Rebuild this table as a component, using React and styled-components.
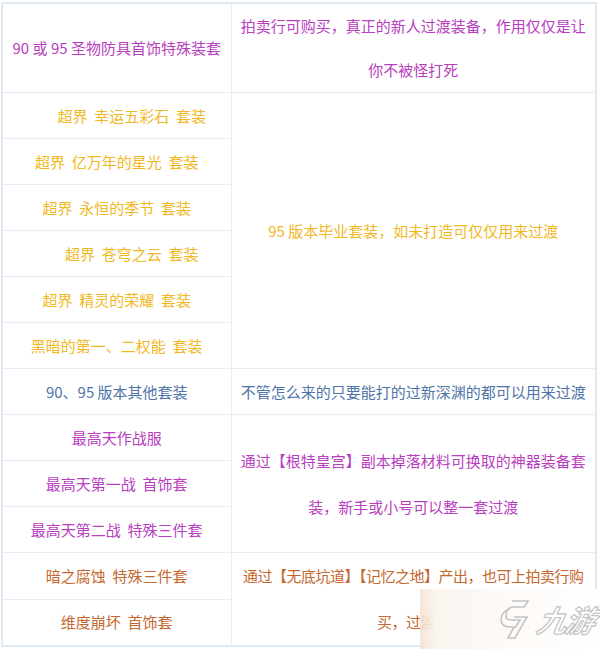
import styled, { createGlobalStyle } from 'styled-components';

const GlobalStyle = createGlobalStyle`
  html, body {
    margin: 0;
    padding: 0;
    background: #ffffff;
  }
  body {
    font-family: "Noto Sans CJK SC", "Noto Sans", sans-serif;
  }
`;

const colors = {
  purple: '#b840c0',
  gold: '#f1b823',
  blue: '#4f74a8',
  orange: '#c3682e',
};

const Page = styled.div`
  position: relative;
  width: 600px;
  height: 649px;
  overflow: hidden;
  padding: 2px 0 0 1px;
  box-sizing: border-box;
`;

const Table = styled.table`
  width: 596px;
  border-collapse: collapse;
  table-layout: fixed;
  border: 2px solid #dfe9f4;
  font-size: 15px;
`;

const Row = styled.tr`
  height: ${(p) => (p.$tall ? '88px' : '46px')};
`;

const Cell = styled.td`
  border: 1px solid #e6edf4;
  padding: 0 8px 0 ${(p) => 8 + (p.$indent || 0)}px;
  text-align: center;
  vertical-align: middle;
  color: ${(p) => colors[p.$color]};
  line-height: ${(p) => (p.$lh ? `${p.$lh}px` : '20px')};
  white-space: ${(p) => (p.$nowrap ? 'nowrap' : 'normal')};
  letter-spacing: ${(p) => (p.$tight ? '-0.5px' : '0')};
`;

const Watermark = styled.div`
  position: absolute;
  right: 0;
  bottom: 0;
  width: 180px;
  height: 60px;
  display: flex;
  align-items: center;
  justify-content: flex-end;
  gap: 4px;
  padding-right: 6px;
  box-sizing: border-box;
  background: linear-gradient(
    90deg,
    rgba(244, 222, 204, 0.8) 0px,
    rgba(251, 245, 240, 1) 16px,
    rgba(255, 255, 255, 1) 100%
  );
`;

const LogoText = styled.span`
  font-family: "Noto Sans CJK SC", sans-serif;
  font-size: 30px;
  font-weight: 700;
  font-style: italic;
  color: #ffffff;
  -webkit-text-stroke: 1.2px #c4c4c4;
  transform: skewX(-12deg);
  letter-spacing: -2px;
`;

const Swirl = () => (
  <svg width="36" height="44" viewBox="0 0 36 44" fill="none" stroke="#c4c4c4" strokeWidth="1.6">
    <path d="M14 4 L30 4 L26 10 L16 10 Q9 10 8 17 Q7 23 13 23 L22 23 L17 31" />
    <path d="M12 12 Q4 14 3 22 Q3 30 12 30 L16 30 L10 41 L17 41 L29 20 L16 20" />
  </svg>
);

const nb = '\u00a0\u00a0';

const App = () => (
  <Page>
    <GlobalStyle />
    <Table>
      <colgroup>
        <col style={{ width: '229px' }} />
        <col />
      </colgroup>
      <tbody>
        <Row $tall>
          <Cell $color="purple" $nowrap>90 或 95 圣物防具首饰特殊装套</Cell>
          <Cell $color="purple" $lh={44}>
            拍卖行可购买，真正的新人过渡装备，作用仅仅是让<br />你不被怪打死
          </Cell>
        </Row>
        <Row>
          <Cell $color="gold" $indent={30}>超界{nb}幸运五彩石{nb}套装</Cell>
          <Cell $color="gold" rowSpan={6}>95 版本毕业套装，如未打造可仅仅用来过渡</Cell>
        </Row>
        <Row>
          <Cell $color="gold">超界{nb}亿万年的星光{nb}套装</Cell>
        </Row>
        <Row>
          <Cell $color="gold">超界{nb}永恒的季节{nb}套装</Cell>
        </Row>
        <Row>
          <Cell $color="gold" $indent={30}>超界{nb}苍穹之云{nb}套装</Cell>
        </Row>
        <Row>
          <Cell $color="gold">超界{nb}精灵的荣耀{nb}套装</Cell>
        </Row>
        <Row>
          <Cell $color="gold">黑暗的第一、二权能{nb}套装</Cell>
        </Row>
        <Row>
          <Cell $color="blue">90、95 版本其他套装</Cell>
          <Cell $color="blue" $nowrap>不管怎么来的只要能打的过新深渊的都可以用来过渡</Cell>
        </Row>
        <Row>
          <Cell $color="purple">最高天作战服</Cell>
          <Cell $color="purple" rowSpan={3} $lh={46} $nowrap>
            通过【根特皇宫】副本掉落材料可换取的神器装备套<br />装，新手或小号可以整一套过渡
          </Cell>
        </Row>
        <Row>
          <Cell $color="purple">最高天第一战{nb}首饰套</Cell>
        </Row>
        <Row>
          <Cell $color="purple">最高天第二战{nb}特殊三件套</Cell>
        </Row>
        <Row>
          <Cell $color="orange">暗之腐蚀{nb}特殊三件套</Cell>
          <Cell $color="orange" rowSpan={2} $lh={46} $nowrap $tight>
            通过【无底坑道】【记忆之地】产出，也可上拍卖行购<br />买，过渡用
          </Cell>
        </Row>
        <Row>
          <Cell $color="orange">维度崩坏{nb}首饰套</Cell>
        </Row>
      </tbody>
    </Table>
    <Watermark>
      <Swirl />
      <LogoText>九游</LogoText>
    </Watermark>
  </Page>
);

export default App;
